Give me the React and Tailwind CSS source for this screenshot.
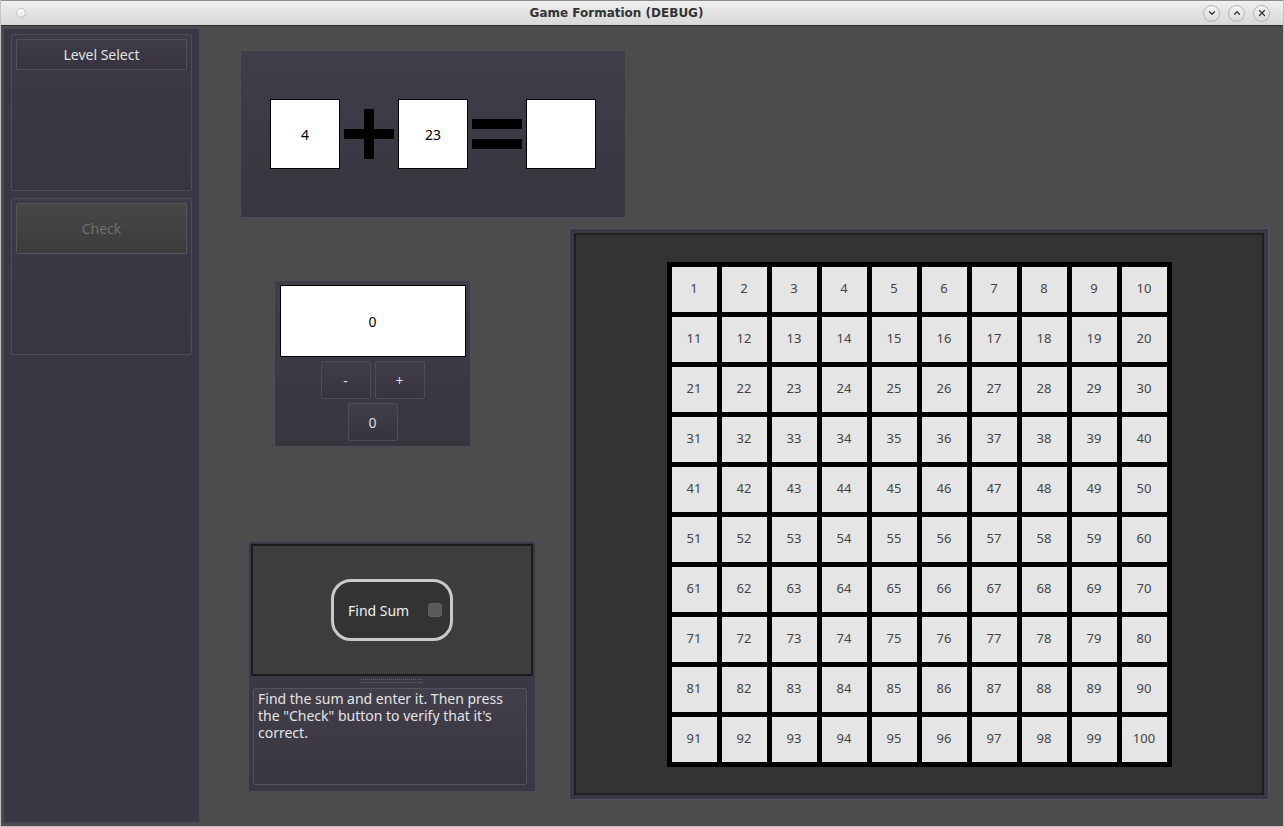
import { ChevronDown, ChevronUp, X } from "lucide-react";

const font = { fontFamily: '"Noto Sans", "DejaVu Sans", sans-serif' };

function TitleBar() {
  return (
    <div className="h-[26px] flex items-center relative border-t border-[#8c8c8c] border-b border-b-[#2e2e2e] bg-gradient-to-b from-[#efefef] to-[#d8d8d8]">
      <div className="ml-[15px] w-[10px] h-[10px] rounded-full bg-gradient-to-b from-white to-[#e4e4e4] border border-[#c4c4c4]" />
      <div className="flex-1 text-center text-[12px] font-bold text-[#333] pl-[4px]" style={{ fontFamily: '"DejaVu Sans", sans-serif' }}>
        Game Formation (DEBUG)
      </div>
      <div className="flex items-center gap-[8px] mr-[13px]">
        {[ChevronDown, ChevronUp, X].map((Icon, i) => (
          <div key={i} className="w-[17px] h-[17px] rounded-full border border-[#b4b4b4] bg-gradient-to-b from-[#f4f4f4] to-[#dadada] flex items-center justify-center">
            <Icon size={10} strokeWidth={3} className="text-[#333]" />
          </div>
        ))}
      </div>
    </div>
  );
}

function Sidebar() {
  return (
    <div className="w-[197px] h-[795px] ml-[2px] mt-[2px] bg-[#3b3845] border border-[#4a4755] pt-[5px] px-[7px] flex flex-col gap-[7px]">
      <div className="h-[157px] bg-gradient-to-b from-[#3d3a47] to-[#383542] border border-[#4f4c5a] rounded-[2px] p-[4px]">
        <div className="h-[31px] rounded-[2px] border border-[#54515e] bg-gradient-to-b from-[#3f3c49] to-[#37343f] text-[#e2e2e2] text-[14px] flex items-center justify-center">
          Level Select
        </div>
      </div>
      <div className="h-[157px] bg-gradient-to-b from-[#3d3a47] to-[#383542] border border-[#4f4c5a] rounded-[2px] p-[4px]">
        <div className="h-[51px] rounded-[2px] border border-[#575757] bg-gradient-to-b from-[#474747] to-[#3c3c3c] text-[#707070] text-[14px] flex items-center justify-center">
          Check
        </div>
      </div>
    </div>
  );
}

function Box({ children }) {
  return (
    <div className="w-[70px] h-[70px] bg-white border border-black flex items-center justify-center text-[14px] text-black">
      {children}
    </div>
  );
}

function Btn({ children }) {
  return (
    <div className="w-[50px] h-[38px] rounded-[2px] border border-[#4f4c5a] bg-gradient-to-b from-[#413e4b] to-[#37343f] text-[#dcdcdc] text-[14px] flex items-center justify-center">
      {children}
    </div>
  );
}

function Equation() {
  return (
    <div className="w-[386px] h-[168px] bg-gradient-to-b from-[#413e4a] to-[#38353f] border border-[#4e4b59] rounded-[2px] flex items-center justify-center gap-[4px]">
      <Box>4</Box>
      <div className="w-[50px] h-[50px] flex items-center justify-center relative">
        <div className="w-[50px] h-[10px] bg-black" />
        <div className="absolute w-[10px] h-[50px] bg-black" />
      </div>
      <Box>23</Box>
      <div className="w-[50px] h-[30px] flex flex-col justify-between">
        <div className="h-[10px] bg-black" />
        <div className="h-[10px] bg-black" />
      </div>
      <Box></Box>
    </div>
  );
}

function Counter() {
  return (
    <div className="ml-[26px] mt-[52px] w-[197px] h-[167px] bg-gradient-to-b from-[#413e4a] to-[#38353f] border border-[#4e4b59] rounded-[2px] p-[4px] flex flex-col items-center">
      <div className="w-[186px] h-[72px] bg-white border border-black flex items-center justify-center text-[14px] text-black">0</div>
      <div className="flex gap-[4px] mt-[4px]">
        <Btn>-</Btn>
        <Btn>+</Btn>
      </div>
      <div className="mt-[4px]">
        <Btn>0</Btn>
      </div>
    </div>
  );
}

function FindSum() {
  return (
    <div className="mt-[94px] w-[288px] h-[251px] bg-[#3b3845] border border-[#4e4b59] rounded-[2px] p-[2px]">
      <div className="h-[132px] border-2 border-[#1c1c1c] bg-[#3d3d3d] flex items-center justify-center">
        <div className="w-[122px] h-[62px] rounded-[20px] border-[3px] border-[#c9c9c9] bg-[#333333] flex items-center pl-[14px] pr-[8px] justify-between">
          <span className="text-[14px] text-[#f0f0f0]">Find Sum</span>
          <div className="w-[14px] h-[14px] rounded-[3px] bg-[#5a5a5a] border border-[#626262]" />
        </div>
      </div>
      <div className="h-[12px] flex items-center justify-center">
        <svg width="62" height="6" viewBox="0 0 62 6">
          <defs>
            <pattern id="dots" width="2" height="3" patternUnits="userSpaceOnUse">
              <rect width="1" height="1" fill="#6a6776" />
            </pattern>
          </defs>
          <rect width="62" height="6" fill="url(#dots)" />
        </svg>
      </div>
      <div className="ml-[2px] w-[274px] h-[97px] rounded-[2px] border border-[#55525f] bg-gradient-to-b from-[#423f4b] to-[#393642] px-[4px] pt-[1px] text-[14px] leading-[17px] text-[#e4e4e4]">
        Find the sum and enter it. Then press the "Check" button to verify that it's correct.
      </div>
    </div>
  );
}

function NumberGrid() {
  const nums = Array.from({ length: 100 }, (_, i) => i + 1);
  return (
    <div className="ml-[33px] w-[700px] h-[572px] shrink-0 bg-[#3b3845] border border-[#54515e] p-[4px]">
      <div className="w-full h-full border-2 border-[#1f1f1f] bg-[#333333] flex items-center justify-center">
        <div className="bg-black p-[5px] grid grid-cols-10 gap-[5px]">
          {nums.map((n) => (
            <div key={n} className="w-[45px] h-[45px] bg-[#e5e5e5] flex items-center justify-center text-[13px] text-[#444]">
              {n}
            </div>
          ))}
        </div>
      </div>
    </div>
  );
}

export default function App() {
  return (
    <div className="w-[1284px] h-[827px] overflow-hidden bg-[#4c4c4c] border-x border-[#c4c4c4] border-b" style={font}>
      <TitleBar />
      <div className="flex items-start">
        <Sidebar />
        <div className="ml-[40px] mt-[24px] flex flex-col">
          <Equation />
          <div className="flex items-start mt-[10px]">
            <div className="ml-[8px] flex flex-col shrink-0">
              <Counter />
              <FindSum />
            </div>
            <NumberGrid />
          </div>
        </div>
      </div>
    </div>
  );
}
